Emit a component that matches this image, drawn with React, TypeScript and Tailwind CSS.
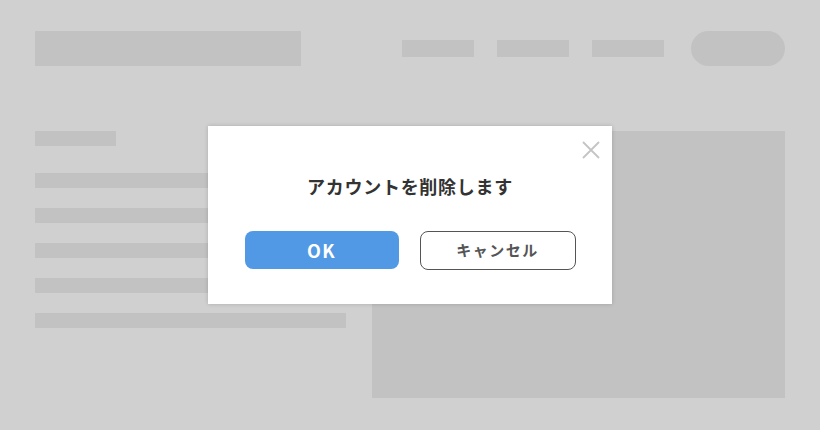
import React from "react";

export default function App() {
  const font = { fontFamily: '"Noto Sans CJK JP", "Noto Sans", sans-serif' };
  return (
    <div className="relative w-[820px] h-[430px] bg-[#d0d0d0] overflow-hidden" style={font}>
      <div className="px-[35px] pt-[31px]">
        <div className="flex items-center h-[35px]">
          <div className="w-[266px] h-[35px] bg-[#c2c2c2]" />
          <div className="ml-auto flex items-center gap-[23px]">
            <div className="w-[72px] h-[17px] bg-[#c2c2c2]" />
            <div className="w-[72px] h-[17px] bg-[#c2c2c2]" />
            <div className="w-[72px] h-[17px] bg-[#c2c2c2]" />
          </div>
          <div className="ml-[27px] w-[94px] h-[35px] rounded-full bg-[#c2c2c2]" />
        </div>
        <div className="flex mt-[65px]">
          <div className="flex flex-col w-[311px]">
            <div className="w-[81px] h-[15px] bg-[#c2c2c2]" />
            <div className="mt-[27px] h-[15px] bg-[#c2c2c2]" />
            <div className="mt-[20px] h-[15px] bg-[#c2c2c2]" />
            <div className="mt-[20px] h-[15px] bg-[#c2c2c2]" />
            <div className="mt-[20px] h-[15px] bg-[#c2c2c2]" />
            <div className="mt-[20px] h-[15px] bg-[#c2c2c2]" />
          </div>
          <div className="ml-[26px] w-[413px] h-[267px] bg-[#c2c2c2]" />
        </div>
      </div>

      <div className="absolute left-[208px] top-[126px] w-[404px] h-[178px] bg-white shadow-[0_0_4px_rgba(0,0,0,0.18)] flex flex-col items-center">
        <button className="absolute right-[12px] top-[15px] w-[18px] h-[18px]" aria-label="close">
          <svg width="18" height="18" viewBox="0 0 18 18">
            <path d="M1 1L17 17M17 1L1 17" stroke="#c4c4c4" strokeWidth="1.8" fill="none" />
          </svg>
        </button>
        <div className="mt-[47px] text-[18px] leading-[26px] font-bold tracking-[0.04em] text-[#333]">
          アカウントを削除します
        </div>
        <div className="mt-[32px] flex gap-[21px]">
          <button className="w-[154px] h-[38px] rounded-[8px] bg-[#5199e4] text-white text-[18px] font-bold tracking-[0.08em] flex items-center justify-center">
            OK
          </button>
          <button className="w-[156px] h-[39px] rounded-[8px] border border-[#555] bg-white text-[#555] text-[15px] font-bold tracking-[0.1em] flex items-center justify-center">
            キャンセル
          </button>
        </div>
      </div>
    </div>
  );
}
